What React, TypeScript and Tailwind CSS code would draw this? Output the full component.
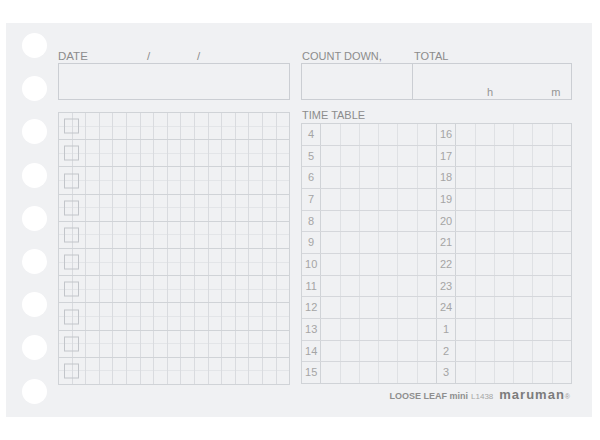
import React from "react";

const font = { fontFamily: '"Liberation Sans", Arial, Helvetica, sans-serif' };

function LeftGrid() {
  const rows = Array.from({ length: 10 });
  const cols = Array.from({ length: 17 });
  return (
    <div className="mt-[12px] flex h-[273px] w-[232px] flex-col border border-[#d0d3d7]">
      {rows.map((_, r) => (
        <div
          key={r}
          className={`relative flex flex-1 ${r > 0 ? "border-t border-[#d0d3d7]" : ""}`}
        >
          {cols.map((_, c) => (
            <div
              key={c}
              className={`flex flex-1 flex-col ${c > 0 ? "border-l border-[#d9dbdf]" : ""}`}
            >
              <div className="flex-1 border-b border-[#e3e5e8]" />
              <div className="flex-1" />
            </div>
          ))}
          <div className="absolute left-[5px] top-1/2 h-[15px] w-[15px] -translate-y-1/2 border border-[#c2c5ca]" />
        </div>
      ))}
    </div>
  );
}

const leftNums = [4, 5, 6, 7, 8, 9, 10, 11, 12, 13, 14, 15];
const rightNums = [16, 17, 18, 19, 20, 21, 22, 23, 24, 1, 2, 3];

function TimeTable() {
  const cols = Array.from({ length: 14 });
  return (
    <div className="mt-[1px] flex h-[261px] w-[271px] flex-col border border-[#d0d3d7]">
      {leftNums.map((n, r) => (
        <div
          key={r}
          className={`flex flex-1 ${r > 0 ? "border-t border-[#d5d7db]" : ""}`}
        >
          {cols.map((_, c) => (
            <div
              key={c}
              className={`flex flex-1 items-center justify-center text-[11px] text-[#a5a5a5] ${
                c > 0 ? (c === 1 || c === 7 || c === 8 ? "border-l border-[#d0d3d7]" : "border-l border-[#dfe1e4]") : ""
              }`}
            >
              {c === 0 ? n : c === 7 ? rightNums[r] : null}
            </div>
          ))}
        </div>
      ))}
    </div>
  );
}

export default function App() {
  const holes = Array.from({ length: 9 });
  return (
    <div className="h-[440px] w-[600px] bg-white pl-[6px] pt-[23px]" style={font}>
      <div className="flex h-[394px] w-[586px] bg-[#f0f1f3]">
        <div className="flex w-[41px] flex-col gap-[18.2px] pl-[16px] pt-[10px]">
          {holes.map((_, i) => (
            <div key={i} className="h-[25px] w-[25px] rounded-full bg-white" />
          ))}
        </div>
        <div className="ml-[11px] flex gap-[11px] pt-[27px]">
          {/* Left column */}
          <div className="flex w-[232px] flex-col">
            <div className="flex h-[13px] items-center text-[11.5px] leading-[13px] text-[#8c8c8c]">
              <span className="w-[89px]">DATE</span>
              <span className="w-[50px]">/</span>
              <span>/</span>
            </div>
            <div className="h-[37px] border border-[#cbced3]" />
            <LeftGrid />
          </div>
          {/* Right column */}
          <div className="flex w-[271px] flex-col">
            <div className="flex h-[13px] items-center text-[11px] leading-[13px] text-[#8c8c8c]">
              <span className="w-[113px] pl-[1px]">COUNT DOWN,</span>
              <span>TOTAL</span>
            </div>
            <div className="flex h-[37px] border border-[#cbced3]">
              <div className="w-[111px] border-r border-[#cbced3]" />
              <div className="flex flex-1 items-end pl-[74px] text-[11px] leading-[13px] text-[#959595]">
                <span>h</span>
                <span className="ml-[58px]">m</span>
              </div>
            </div>
            <div className="mt-[9px] h-[13px] pl-[1px] text-[11px] leading-[13px] text-[#8c8c8c]">
              TIME TABLE
            </div>
            <TimeTable />
            <div className="mt-[4px] flex items-baseline justify-end pr-[2px] leading-none">
              <span className="text-[9px] font-bold text-[#8e8e8e]">LOOSE LEAF mini</span>
              <span className="ml-[3px] text-[8px] text-[#a5a5a5]">L1438</span>
              <span className="ml-[6px] text-[13px] font-bold tracking-[1px] text-[#7c7c7c]">maruman</span>
              <span className="text-[7px] text-[#9a9a9a]">®</span>
            </div>
          </div>
        </div>
      </div>
    </div>
  );
}
